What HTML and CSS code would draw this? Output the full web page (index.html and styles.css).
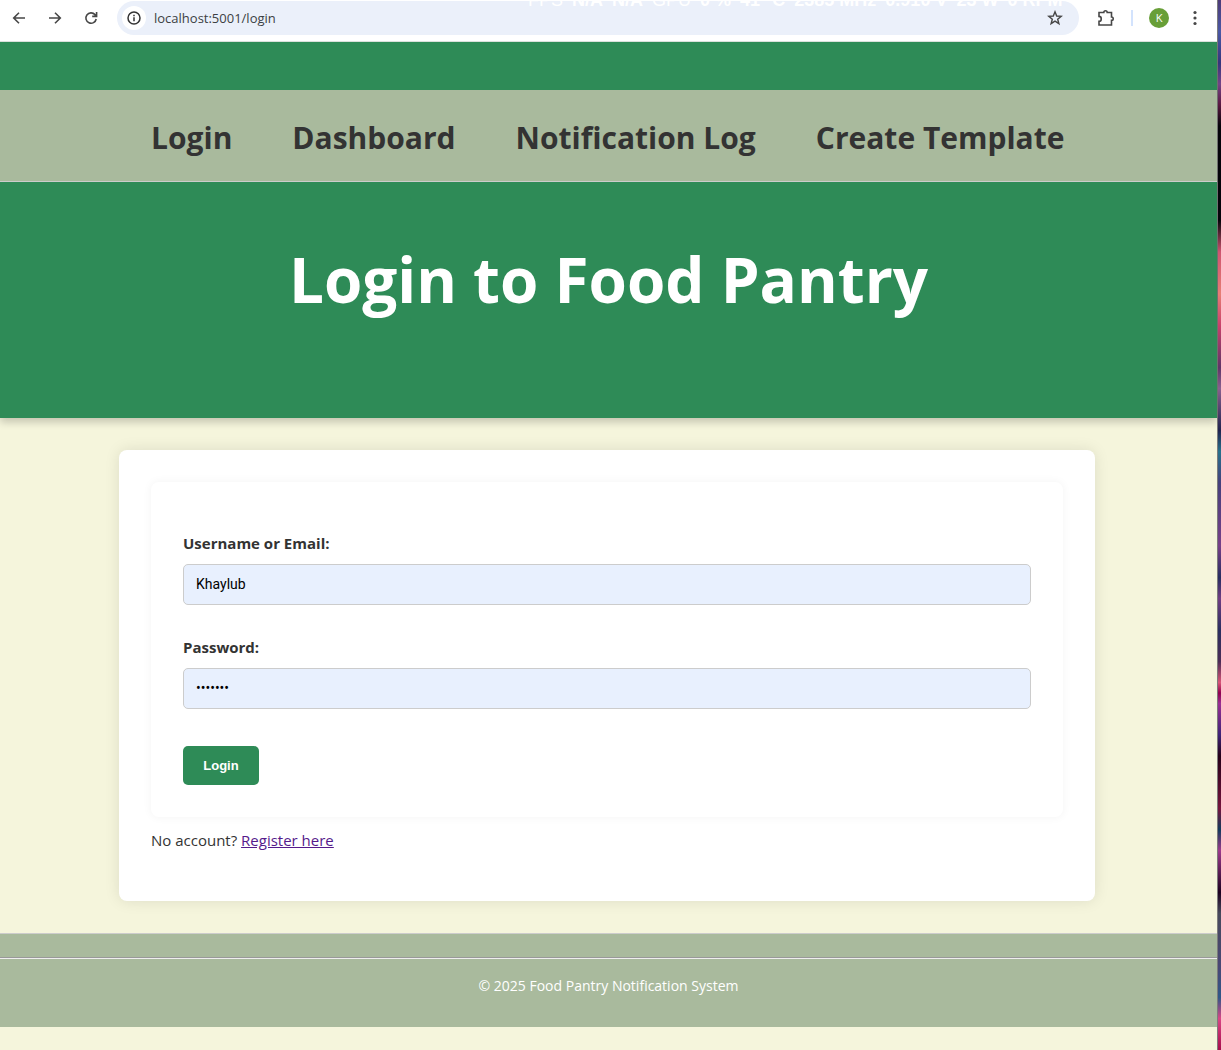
FILE: index.html
```html
<!DOCTYPE html>
<html lang="en">
<head>
<meta charset="utf-8">
<title>Login to Food Pantry</title>
<link rel="stylesheet" href="styles.css">
</head>
<body>
<div class="desktop">
<div class="window">
  <div class="toolbar">
    <button class="tool" aria-label="Back"><svg width="16" height="16" viewBox="0 0 16 16"><path d="M14 8H3M8 2.7L2.7 8L8 13.3"/></svg></button>
    <button class="tool" aria-label="Forward"><svg width="16" height="16" viewBox="0 0 16 16"><path d="M2 8H13M8 2.7L13.3 8L8 13.3"/></svg></button>
    <button class="tool reload" aria-label="Reload"><svg width="16" height="16" viewBox="0 0 16 16"><path d="M13.2 9A5.2 5.2 0 1 1 12 4.6L13.2 6M13.6 2V6.4H9.2"/></svg></button>
    <div class="omnibox">
      <button class="info" aria-label="Site information"><svg width="16" height="16" viewBox="0 0 16 16"><circle cx="8" cy="8" r="6"/><path d="M8 7.2V11.2M8 4.7V6.2"/></svg></button>
      <input class="url" type="text" aria-label="Address" value="localhost:5001/login">
      <button class="star" aria-label="Bookmark"><svg width="16" height="16" viewBox="0 0 16 16"><path d="M8 1.8L9.7 6L14.2 6.3L10.7 9.2L11.9 13.7L8 11.2L4.1 13.7L5.3 9.2L1.8 6.3L6.3 6Z"/></svg></button>
    </div>
    <button class="tool ext" aria-label="Extensions"><svg width="18" height="18" viewBox="0 0 18 18"><path d="M2 3.5H6.8C6.8 1.2 10.2 1.2 10.2 3.5H14.5V8C16.8 8 16.8 11.4 14.5 11.4V16H2V12.4C5 12.4 5 7.4 2 7.4Z"/></svg></button>
    <span class="divider"></span>
    <button class="avatar" aria-label="Profile">K</button>
    <button class="tool more" aria-label="Menu"><svg width="16" height="16" viewBox="0 0 16 16"><circle cx="8" cy="2.5" r="1.6"/><circle cx="8" cy="8" r="1.6"/><circle cx="8" cy="13.5" r="1.6"/></svg></button>
    <div class="stats"><span>FPS</span><b>N/A</b><b>N/A</b><span>GPU</span><b>0 %</b><b>41 °C</b><b>2385 MHz</b><b>0.910 V</b><b>23 W</b><b>0 RPM</b></div>
  </div>
  <header class="hero">
    <nav class="nav">
      <a href="#login">Login</a>
      <a href="#dashboard">Dashboard</a>
      <a href="#log">Notification Log</a>
      <a href="#template">Create Template</a>
    </nav>
    <h1>Login to Food Pantry</h1>
  </header>
  <main class="card">
    <form class="form">
      <label for="user">Username or Email:</label>
      <input id="user" type="text" value="Khaylub">
      <label for="pass">Password:</label>
      <input id="pass" type="password" value="khaylub">
      <button class="submit" type="button">Login</button>
    </form>
    <p class="register">No account? <a href="#register">Register here</a></p>
  </main>
  <footer class="footer">
    <hr>
    <p>© 2025 Food Pantry Notification System</p>
  </footer>
</div>
<div class="wallpaper"></div>
</div>
</body>
</html>
```
FILE: styles.css
```css
* { box-sizing: border-box; }
body { margin: 0; color: #333; background: #f5f5dc; font: 15px/26px "Segoe UI", "Open Sans", sans-serif; }
button { border: 0; padding: 0; background: none; }
svg { display: block; fill: none; stroke: #474747; stroke-width: 1.6; }
.desktop { display: flex; min-height: 100vh; }
.window { flex: 1; min-width: 0; border-right: 1px solid #7c7c7c; }
.wallpaper {
  width: 3px;
  background: linear-gradient(#4d3b78 0, #4a58a5 3%, #35347c 6%, #744487 8%, #5a1740 10%, #05040a 12%, #05040a 21%, #cf5570 24%, #e77e74 28%, #c9416b 31%, #5f3467 35%, #8a608f 37%, #20234f 41%, #27718c 43%, #45407c 46%, #773f88 52%, #262d60 55%, #703d83 57%, #292e60 60%, #4b2c56 63%, #d95577 65%, #90004f 66%, #9a2f93 67%, #3d2377 70%, #250018 72%, #76143d 77%, #123a5c 79%, #9d3a8c 81%, #1c0020 85%, #47495c 87%, #4a4775 92%, #2f5788 95%, #d94685 97%, #a80c4c 100%);
}
.toolbar { position: relative; display: flex; align-items: center; height: 42px; padding: 1px 14px 7px 11px; overflow: hidden; background: #fff; border-bottom: 1px solid #dbe0dc; }
.tool { flex: none; margin-right: 20px; }
.reload { margin-right: 18px; }
.omnibox { flex: 1; display: flex; align-items: center; height: 34px; padding: 0 16px 0 5px; border-radius: 17px; background: #ebf0fa; margin-right: 18px; }
.info { display: grid; place-items: center; width: 24px; height: 24px; border-radius: 12px; background: #fff; }
.info svg { stroke: #333; stroke-width: 1.5; }
.url { flex: 1; min-width: 0; border: 0; padding: 0 8px; background: none; color: #3c3f43; font: 13px/20px "Segoe UI", "Open Sans", sans-serif; }
.star svg { stroke-width: 1.4; }
.ext { margin-right: 16px; }
.divider { width: 2px; height: 16px; background: #d3e3fd; margin-right: 16px; }
.avatar { width: 20px; height: 20px; border-radius: 10px; background: #689f38; color: #fff; font: 11px/20px "Segoe UI", "Open Sans", sans-serif; }
.more { margin: 0 0 0 18px; }
.more svg { fill: #474747; stroke: none; }
.stats { position: absolute; top: -10px; left: 528px; display: flex; gap: 9px; color: #fff; font: 18px/20px "Liberation Sans", sans-serif; white-space: nowrap; }
.hero { height: 376px; padding-top: 48px; background: #2e8b57; box-shadow: 0 4px 8px rgba(0, 0, 0, .2); }
.nav { display: flex; gap: 60px; padding: 24px 32px 19px 151px; background: #a9ba9d; border-bottom: 1px solid #ccc; }
.nav a { color: #333; font-size: 30px; line-height: 48px; font-weight: 700; text-decoration: none; white-space: nowrap; }
h1 { margin: 46px 0 0; color: #fff; text-align: center; font-size: 62px; line-height: 102px; }
.card { margin: 32px 122px 32px 119px; padding: 32px 32px 48px; border-radius: 8px; background: #fff; box-shadow: 0 0 15px rgba(0, 0, 0, .1); }
.form { padding: 48px 32px 32px; border-radius: 8px; background: #fff; box-shadow: 0 0 10px rgba(0, 0, 0, .05); }
.form label { display: block; margin-bottom: 8px; font-weight: 700; }
.form input { display: block; width: 100%; height: 41px; margin-bottom: 29px; padding: 0 12px 2px; border: 1px solid #ccc; border-radius: 5px; background: #e8f0fe; color: #000; font: 14px/20px Roboto, sans-serif; }
.submit { display: block; width: 76px; height: 39px; margin-top: 37px; border-radius: 5px; background: #2e8b57; color: #fff; font: 700 13px/20px "Liberation Sans", sans-serif; }
.register { margin: 10px 0 0; }
.register a { color: #551a8b; }
.footer { padding: 23px 0 28px; background: #a9ba9d; border-top: 1px solid #ccc; color: #fff; text-align: center; font-size: 14px; }
.footer hr { margin: 0 0 14px; border: 0; border-top: 1px solid #999; border-bottom: 1px solid #eee; }
.footer p { margin: 0; }
```
